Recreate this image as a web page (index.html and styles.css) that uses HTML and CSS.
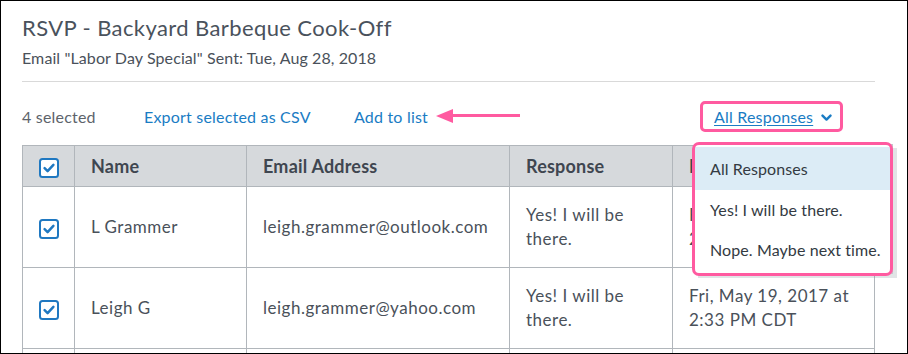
FILE: index.html
```html
<!DOCTYPE html>
<html>
<head>
<meta charset="utf-8">
<link rel="stylesheet" href="styles.css">
</head>
<body>
<div class="frame">
  <div class="page">
    <h1 class="title">RSVP - Backyard Barbeque Cook-Off</h1>
    <p class="subtitle">Email "Labor Day Special" Sent: Tue, Aug 28, 2018</p>
    <div class="divider"></div>
    <div class="toolbar">
      <span class="count">4 selected</span>
      <a class="link export">Export selected as CSV</a>
      <a class="link addlist">Add to list</a>
      <span class="arrow"><span class="arrow-head"></span><span class="arrow-shaft"></span></span>
      <div class="filter">
        <a class="filter-btn"><span class="filter-label">All Responses</span>
          <svg class="chev" width="11" height="8" viewBox="0 0 11 8"><path d="M1.5 1.6 L5.5 5.6 L9.5 1.6" fill="none" stroke="#1a7cc4" stroke-width="2.4" stroke-linecap="round" stroke-linejoin="round"/></svg>
        </a>
        <div class="menu">
          <div class="menu-item active">All Responses</div>
          <div class="menu-item">Yes! I will be there.</div>
          <div class="menu-item">Nope. Maybe next time.</div>
        </div>
      </div>
    </div>
    <table class="grid">
      <thead>
        <tr>
          <th class="c-check"><span class="cb"><svg width="20" height="20" viewBox="0 0 20 20"><rect x="1" y="1" width="18" height="18" rx="2.5" fill="#fff" stroke="#1f78c1" stroke-width="2"/><path d="M5.6 10.2 L8.6 13.1 L14.4 6.9" fill="none" stroke="#1f78c1" stroke-width="2.5" stroke-linecap="round" stroke-linejoin="round"/></svg></span></th>
          <th class="c-name">Name</th>
          <th class="c-email">Email Address</th>
          <th class="c-resp">Response</th>
          <th class="c-date">Date Responded</th>
        </tr>
      </thead>
      <tbody>
        <tr>
          <td class="c-check"><span class="cb"><svg width="20" height="20" viewBox="0 0 20 20"><rect x="1" y="1" width="18" height="18" rx="2.5" fill="#fff" stroke="#1f78c1" stroke-width="2"/><path d="M5.6 10.2 L8.6 13.1 L14.4 6.9" fill="none" stroke="#1f78c1" stroke-width="2.5" stroke-linecap="round" stroke-linejoin="round"/></svg></span></td>
          <td>L Grammer</td>
          <td>leigh.grammer@outlook.com</td>
          <td>Yes! I will be there.</td>
          <td>Fri, May 19, 2017 at 2:35 PM CDT</td>
        </tr>
        <tr>
          <td class="c-check"><span class="cb"><svg width="20" height="20" viewBox="0 0 20 20"><rect x="1" y="1" width="18" height="18" rx="2.5" fill="#fff" stroke="#1f78c1" stroke-width="2"/><path d="M5.6 10.2 L8.6 13.1 L14.4 6.9" fill="none" stroke="#1f78c1" stroke-width="2.5" stroke-linecap="round" stroke-linejoin="round"/></svg></span></td>
          <td>Leigh G</td>
          <td>leigh.grammer@yahoo.com</td>
          <td>Yes! I will be there.</td>
          <td>Fri, May 19, 2017 at 2:33 PM CDT</td>
        </tr>
        <tr class="cut">
          <td class="c-check"></td>
          <td></td>
          <td></td>
          <td></td>
          <td></td>
        </tr>
      </tbody>
    </table>
  </div>
</div>
</body>
</html>
```

FILE: styles.css
```css
html, body {
  margin: 0;
  padding: 0;
  background: #fff;
}
body {
  font-family: Lato, "Open Sans", sans-serif;
  color: #4a515a;
}
.frame {
  box-sizing: border-box;
  width: 908px;
  height: 354px;
  border: 1px solid #000;
  overflow: hidden;
}
.page {
  padding: 12px 0 0 21px;
  width: 853px;
}
.title {
  margin: 0;
  font-size: 22px;
  line-height: 30px;
  font-weight: 400;
  letter-spacing: 0.4px;
  color: #4a525c;
}
.subtitle {
  margin: 5px 0 0;
  font-size: 16px;
  line-height: 20px;
  letter-spacing: 0.1px;
  color: #4a515a;
}
.divider {
  margin-top: 13px;
  height: 1px;
  background: #d9d9d9;
}
.toolbar {
  margin-top: 18px;
  height: 32px;
  display: flex;
  align-items: center;
  font-size: 16px;
  letter-spacing: 0.2px;
}
.count {
  color: #5d636b;
  width: 122px;
}
.link {
  color: #1a7cc4;
  cursor: pointer;
}
.export {
  width: 210px;
}
.addlist {
  width: 82px;
}
.arrow {
  display: flex;
  align-items: center;
  margin-top: -1px;
}
.arrow-head {
  width: 0;
  height: 0;
  border-top: 7px solid transparent;
  border-bottom: 7px solid transparent;
  border-right: 17px solid #ff5aa0;
}
.arrow-shaft {
  width: 67px;
  height: 3px;
  background: #ff5aa0;
}
.filter {
  position: relative;
  margin-left: 180px;
}
.filter-btn {
  box-sizing: border-box;
  display: flex;
  align-items: center;
  width: 143px;
  height: 31px;
  margin-top: 1px;
  padding-left: 11px;
  border: 3px solid #ff5aa0;
  border-radius: 5px;
  color: #1a7cc4;
  cursor: pointer;
}
.filter-label {
  text-decoration: underline;
  text-underline-offset: 2px;
}
.chev {
  margin-left: 8px;
  margin-top: 2px;
}
.menu {
  position: absolute;
  z-index: 2;
  left: -6px;
  top: 44px;
  box-sizing: border-box;
  width: 199px;
  height: 130px;
  background: #fff;
  border: 1px solid #c4c8cc;
  box-shadow: 4px 4px 0 rgba(120, 130, 140, 0.22);
  padding-top: 2px;
}
.menu::after {
  content: "";
  position: absolute;
  left: -3px;
  top: -3px;
  right: -1px;
  bottom: -3px;
  border: 3px solid #ff5aa0;
  border-radius: 7px;
}
.menu-item {
  height: 40px;
  line-height: 40px;
  padding-left: 15px;
  font-size: 16px;
  letter-spacing: 0.1px;
  color: #333a42;
}
.menu-item.active {
  height: 43px;
  line-height: 43px;
  background: #dcecf6;
}
.grid {
  margin-top: 13px;
  width: 853px;
  border-collapse: collapse;
  table-layout: fixed;
  font-size: 17px;
  letter-spacing: 0.5px;
}
.grid th, .grid td {
  border: 1px solid #b1b6bb;
  text-align: left;
  vertical-align: middle;
  padding: 0 16px;
}
.grid th {
  background: #d6d9dc;
  height: 40px;
  font-size: 18px;
  letter-spacing: 0.2px;
  font-weight: 700;
  color: #3f4650;
}
.grid td {
  height: 80px;
  line-height: 24px;
  color: #4a515a;
}
.grid .c-check {
  width: 51px;
  padding: 0;
  text-align: center;
}
.c-name { width: 139px; }
.c-email { width: 230px; }
.c-resp { width: 130px; }
.c-date { width: auto; }
.cb {
  display: inline-flex;
  vertical-align: middle;
}
.cb svg {
  display: block;
}
```
